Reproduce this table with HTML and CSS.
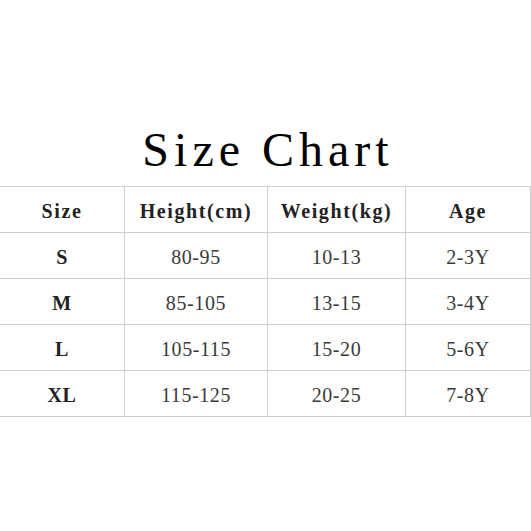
FILE: index.html
```html
<!DOCTYPE html>
<html>
<head>
<meta charset="utf-8">
<link rel="stylesheet" href="styles.css">
</head>
<body>
<div class="page">
  <h1 class="title">Size Chart</h1>
  <div class="chart">
    <div class="cell head">Size</div>
    <div class="cell head">Height(cm)</div>
    <div class="cell head">Weight(kg)</div>
    <div class="cell head">Age</div>

    <div class="cell size">S</div>
    <div class="cell">80-95</div>
    <div class="cell">10-13</div>
    <div class="cell">2-3Y</div>

    <div class="cell size">M</div>
    <div class="cell">85-105</div>
    <div class="cell">13-15</div>
    <div class="cell">3-4Y</div>

    <div class="cell size">L</div>
    <div class="cell">105-115</div>
    <div class="cell">15-20</div>
    <div class="cell">5-6Y</div>

    <div class="cell size">XL</div>
    <div class="cell">115-125</div>
    <div class="cell">20-25</div>
    <div class="cell">7-8Y</div>
  </div>
</div>
</body>
</html>
```

FILE: styles.css
```css
html, body {
  margin: 0;
  padding: 0;
  background: #ffffff;
  overflow: hidden;
}

.page {
  width: 531px;
  height: 531px;
  padding-top: 126px;
  box-sizing: border-box;
  font-family: "Liberation Serif", serif;
}

.title {
  margin: 0 0 12px 0;
  height: 48px;
  font-size: 48px;
  line-height: 48px;
  font-weight: normal;
  text-align: center;
  letter-spacing: 5px;
  padding-left: 5px;
  color: #000;
}

.chart {
  display: grid;
  grid-template-columns: 125px 143px 138px 125px;
  grid-auto-rows: 46px;
  border-top: 1px solid #cfcfd2;
}

.cell {
  display: flex;
  align-items: center;
  justify-content: center;
  padding-top: 3px;
  box-sizing: border-box;
  border-right: 1px solid #cfcfd2;
  border-bottom: 1px solid #cfcfd2;
  font-size: 20px;
  color: #3a3a3a;
  letter-spacing: 0.6px;
}

.head {
  font-weight: bold;
  color: #222;
  letter-spacing: 1.6px;
}

.size {
  font-weight: bold;
  color: #222;
}
```
